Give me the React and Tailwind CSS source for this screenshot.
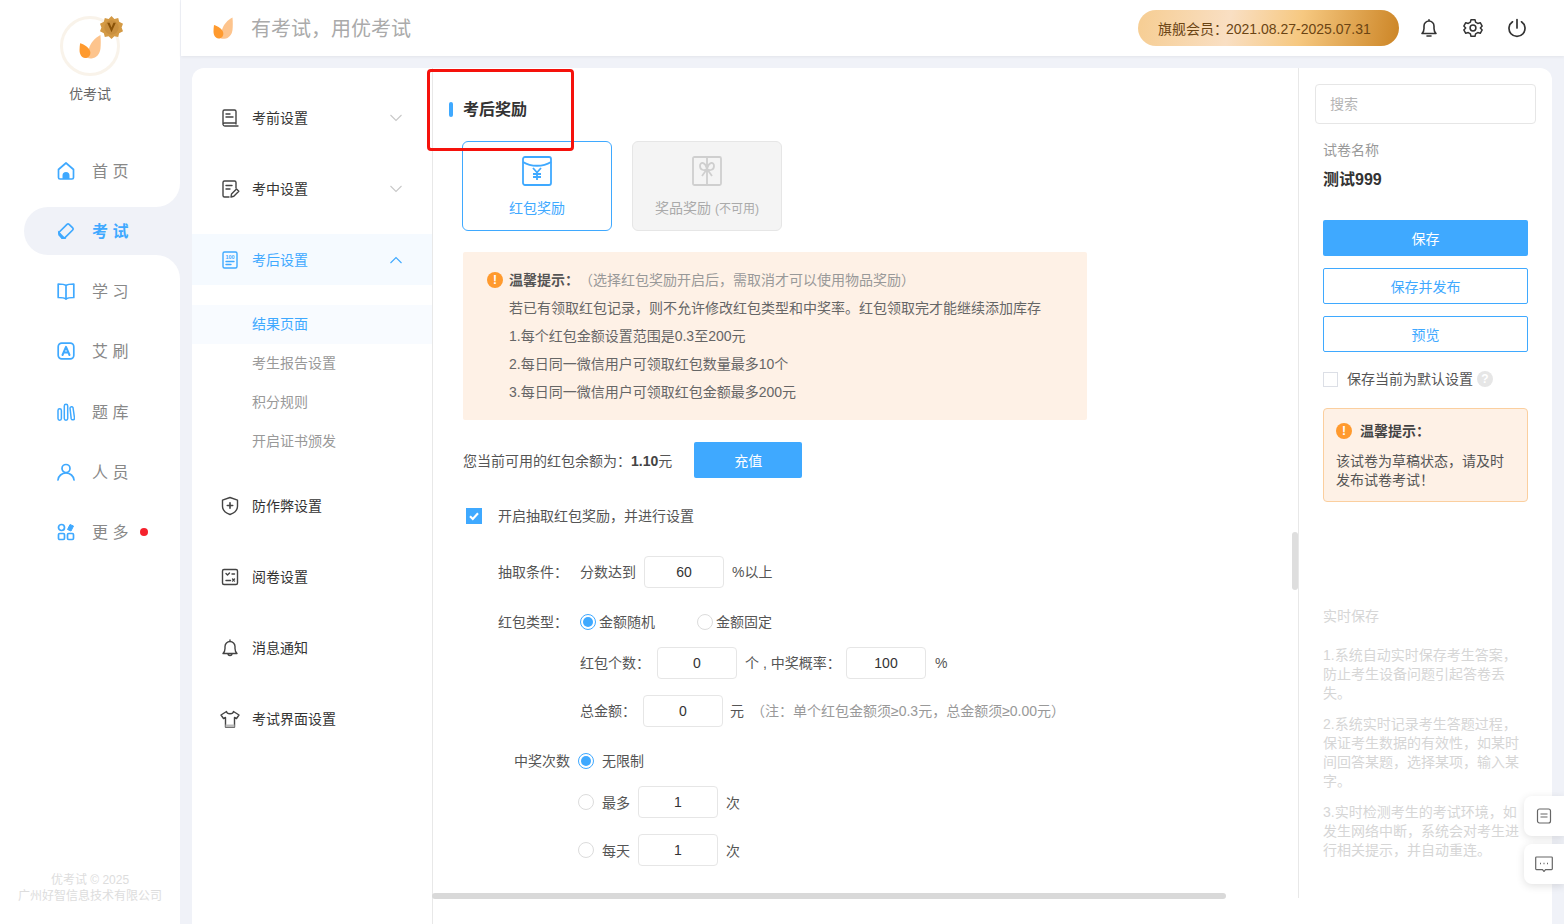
import React from 'react';

const Leaf = ({ className }) => (
  <svg className={className} viewBox="0 0 20 22" fill="none">
    <path d="M19.500 0.500C14.500 3 10.500 7.500 9 13L7 21c1.500.7 3 1 4.500.8 4.500-.5 7.300-3.800 8-8.800.4-3.500.4-8 0-12.500z" fill="#fdc48d" />
    <path d="M1 8c4 1.300 8.700 4 9.300 8 .4 3.300-2 5.800-4.800 5.500C2.300 21.200.500 18 .500 14.500c0-2.300.2-4.500.5-6.500z" fill="#ff9a2e" />
  </svg>
);

const Logo = () => (
  <div className="relative w-[60px] h-[60px] rounded-full border-[3px] border-[#f9f3ea] flex items-center justify-center">
    <Leaf className="w-[22px] h-[25px]" />
    <svg className="absolute -top-[3px] -right-[6px] w-[23px] h-[23px]" viewBox="0 0 24 24">
      <path d="M12 0l3 3 4-1 1 4 4 2-1.500 4L24 16l-4 2-1 4-4-1-3 3-3-3-4 1-1-4-4-2 1.500-4L0 8l4-2 1-4 4 1z" fill="#d49a45" />
      <circle cx="12" cy="12" r="7.500" fill="#c98f3e" />
      <path d="M7.500 7l4.500 10 4.500-10h-2.500L12 12 10 7z" fill="#8a5208" />
    </svg>
  </div>
);

const blue = '#3fa9ff';

const NavIcon = ({ type }) => {
  const p = { fill: 'none', stroke: blue, strokeWidth: 1.7, strokeLinejoin: 'round', strokeLinecap: 'round' };
  return (
    <svg className="w-[18px] h-[18px] shrink-0" viewBox="0 0 18 18">
      {type === 'home' && <><path {...p} d="M1.500 7.500L9 1l7.500 6.500v8a1.500 1.500 0 0 1-1.500 1.500H3a1.500 1.500 0 0 1-1.500-1.500z" /><path d="M5.500 17v-3.500a3.500 3.500 0 0 1 7 0V17z" fill={blue} /></>}
      {type === 'exam' && <><path {...p} d="M1.800 10.500L10 2.300a1.500 1.500 0 0 1 2.100 0l3.600 3.600a1.500 1.500 0 0 1 0 2.100L7.500 16.200H5z" /><path d="M1.800 10.500L7.500 16.200H5.200L2 13z" fill={blue} stroke={blue} strokeWidth="1.500" /></>}
      {type === 'learn' && <path {...p} d="M9 3.500C7.500 2.300 5 2 1.200 2v13.500c3.500 0 6.300.2 7.800 1.500 1.500-1.300 4.300-1.500 7.800-1.500V2C13 2 10.500 2.300 9 3.500zM9 3.500V17" />}
      {type === 'brush' && <><rect {...p} x="1.200" y="1.200" width="15.600" height="15.600" rx="3.500" /><path {...p} strokeWidth="2" d="M5.500 13L9 4.800 12.500 13M6.700 10.500h4.600" /></>}
      {type === 'bank' && <path {...p} strokeWidth="1.500" d="M1 7.500a1.700 1.700 0 0 1 3.400 0v8a1.700 1.700 0 0 1-3.400 0zM7.300 3a1.700 1.700 0 0 1 3.400 0v12.500a1.700 1.700 0 0 1-3.400 0zM13 5a1.600 1.600 0 0 1 3-.5l1.500 10.500a1.700 1.700 0 0 1-3.300.7z" />}
      {type === 'user' && <><circle {...p} cx="9" cy="5.500" r="4" /><path {...p} d="M1 17c.3-4 3.800-7 8-7s7.700 3 8 7" /></>}
      {type === 'more' && <><circle {...p} cx="4.500" cy="4.500" r="3" /><rect {...p} x="1.500" y="10.500" width="6" height="6" rx="1.200" /><rect {...p} x="10.500" y="10.500" width="6" height="6" rx="1.200" /><path d="M13 1.500l3.500 1.500-2.500 5-3.500-1.500z" fill={blue} stroke={blue} /></>}
    </svg>
  );
};

const SubIcon = ({ type, active }) => {
  const c = active ? blue : '#444';
  const p = { fill: 'none', stroke: c, strokeWidth: 1.400, strokeLinejoin: 'round', strokeLinecap: 'round' };
  return (
    <svg className="w-[20px] h-[20px] shrink-0" viewBox="0 0 20 20">
      {type === 'before' && <><path {...p} d="M3 16V3.500A1.500 1.500 0 0 1 4.500 2h10A1.500 1.500 0 0 1 16 3.500V16M3 16.500A1.800 1.800 0 0 0 4.800 18H18M3 16.500a1.500 1.500 0 0 1 1.500-1.500H16M6 6h4M6 9h7" /></>}
      {type === 'during' && <><path {...p} d="M16 9V3.500A1.500 1.500 0 0 0 14.500 2h-10A1.500 1.500 0 0 0 3 3.500v13A1.500 1.500 0 0 0 4.500 18H9M6 6.500h6M6 10h4" /><path {...p} d="M11 18l.5-3 5-5 2.300 2.300-5 5z" /></>}
      {type === 'after' && <><rect {...p} x="3" y="2" width="14" height="16" rx="1.500" /><text x="10" y="8.500" textAnchor="middle" fontSize="5.500" fontWeight="700" fill={c} fontFamily="Liberation Sans">100</text><path {...p} d="M6 11.500h8M6 14.500h5" /></>}
      {type === 'shield' && <><path {...p} d="M10 1.500l7.500 2.700v6c0 4-3.200 6.800-7.500 8.300-4.300-1.500-7.500-4.300-7.500-8.300v-6z" /><path {...p} strokeWidth="1.600" d="M10 6.800v5.400M7.300 9.500h5.400" /></>}
      {type === 'mark' && <><rect {...p} x="2.500" y="2.500" width="15" height="15" rx="1.500" /><path {...p} d="M6 6.500l1.500 1.500 2-2M12 7h2.500M6 13.500h4.500M12.500 12l2 2M14.500 12l-2 2" /></>}
      {type === 'bell' && <><path {...p} d="M3 15.500h14c-1.300-1.300-2-2.500-2-5V8.500a5 5 0 0 0-10 0v2c0 2.500-.7 3.700-2 5zM10 3.500V2M8 15.500a2 2 0 0 0 4 0" /></>}
      {type === 'shirt' && <><path {...p} d="M6.500 2.500L1 6l2.500 3.500 2-1V18h9V8.500l2 1L19 6l-5.500-3.500c-.4 3-6.600 3-7 0z" /><path d="M5.500 15.500h9V18h-9z" fill="#bbb" /></>}
    </svg>
  );
};

const Chevron = ({ up, active }) => (
  <svg className="w-[14px] h-[8px]" viewBox="0 0 14 8" fill="none" stroke={active ? blue : '#c8c8c8'} strokeWidth="1.100">
    <path d={up ? 'M1.500 7L7 1.500 12.500 7' : 'M1.500 1L7 6.500 12.500 1'} />
  </svg>
);

const Warn = () => (
  <span className="w-4 h-4 rounded-full bg-[#ff9a2e] text-white text-[12px] font-bold flex items-center justify-center shrink-0">!</span>
);

const NavItem = ({ icon, label, dot, active }) => (
  <div className={`h-[48px] flex items-center gap-[17px] ${active ? 'pl-[33px] text-[#3fa9ff] font-bold' : 'pl-[57px] text-[#888]'} text-[16px] leading-none`}>
    <NavIcon type={icon} />
    <span className="pt-[2px]">{label}</span>
    {dot && <span className="w-2 h-2 rounded-full bg-[#f5222d] -ml-[5px]" />}
  </div>
);

const SubRow = ({ icon, label, open, active, chevron }) => (
  <div className={`h-[51px] flex items-center pl-[28px] pr-[29px] text-[14px] ${active ? 'bg-[#f5faff] text-[#3fa9ff]' : 'text-[#333]'}`}>
    <SubIcon type={icon} active={active} />
    <span className="ml-[12px] flex-1 pt-[2px]">{label}</span>
    {chevron && <Chevron up={open} active={active} />}
  </div>
);

const SubItem = ({ label, active }) => (
  <div className={`h-[39px] flex items-center pl-[60px] text-[14px] ${active ? 'bg-[#f8fbff] text-[#3fa9ff]' : 'text-[#999]'}`}>{label}</div>
);

const Input = ({ value, w = 'w-[80px]' }) => (
  <div className={`${w} h-[32px] border border-[#e6e6e6] rounded-[4px] flex items-center justify-center text-[14px] text-[#333] shrink-0`}>{value}</div>
);

const Radio = ({ on }) => (
  on ? (
    <span className="w-4 h-4 rounded-full border border-[#3fa9ff] flex items-center justify-center shrink-0">
      <span className="w-[10px] h-[10px] rounded-full bg-[#3fa9ff]" />
    </span>
  ) : (
    <span className="w-4 h-4 rounded-full border border-[#dcdcdc] shrink-0" />
  )
);

export default function App() {
  return (
    <div className="w-[1564px] h-[924px] overflow-hidden flex bg-[#f0f2f8] font-['Liberation_Sans','Noto_Sans_CJK_SC',sans-serif] text-[14px] text-[#555] relative">
      {/* sidebar */}
      <aside className="w-[181px] shrink-0 flex flex-col pr-px">
        <div className="h-[207px] bg-white rounded-br-[24px] flex flex-col items-center">
          <div className="mt-[16px]"><Logo /></div>
          <div className="mt-[8px] h-[20px] leading-[20px] text-[#666]">优考试</div>
          <div className="mt-[43px] w-full"><NavItem icon="home" label="首 页" /></div>
        </div>
        <div className="h-[48px] bg-white pl-[24px]">
          <div className="h-full bg-[#f0f2f8] rounded-l-[24px]">
            <NavItem icon="exam" label="考 试" active />
          </div>
        </div>
        <div className="flex-1 bg-white rounded-tr-[24px] flex flex-col">
          <div className="pt-[12px] flex flex-col gap-[12.25px]">
            <NavItem icon="learn" label="学 习" />
            <NavItem icon="brush" label="艾 刷" />
            <NavItem icon="bank" label="题 库" />
            <NavItem icon="user" label="人 员" />
            <NavItem icon="more" label="更 多" dot />
          </div>
          <div className="mt-auto pb-[20px] text-center text-[12px] leading-[16px] text-[#ddd]">
            <div>优考试 © 2025</div>
            <div>广州好智信息技术有限公司</div>
          </div>
        </div>
      </aside>

      <div className="flex-1 flex flex-col min-w-0">
        {/* header */}
        <header className="h-[56px] bg-white shadow-[0_1px_3px_rgba(0,0,0,0.06)] flex items-center pl-[32px] pr-[37px] shrink-0">
          <Leaf className="w-[20px] h-[22px]" />
          <span className="ml-[18px] pt-[2px] text-[20px] text-[#aaa]">有考试，用优考试</span>
          <div className="ml-auto h-[36px] w-[261px] rounded-full bg-[linear-gradient(100deg,#f6cd92_0%,#f9dfc3_35%,#f6c880_62%,#cc8526_100%)] flex items-center pl-[20px] pt-[2px] text-[#6b4413] whitespace-nowrap">
            <span>旗舰会员：</span>
            <span className="-ml-[2px]">2021.08.27-2025.07.31</span>
          </div>
          <svg className="ml-[20px] w-[20px] h-[20px]" viewBox="0 0 20 20" fill="none" stroke="#333" strokeWidth="1.600" strokeLinejoin="round" strokeLinecap="round">
            <path d="M3 15.500h14c-1.300-1.300-2-2.500-2-5V8a5 5 0 0 0-10 0v2.500c0 2.500-.7 3.700-2 5zM10 3V1.800M8 18h4" />
          </svg>
          <svg className="ml-[24px] w-[20px] h-[20px]" viewBox="0 0 24 24" fill="none" stroke="#333" strokeWidth="1.800" strokeLinejoin="round">
            <path d="M9.600 2h4.800l.7 3 2.600 1.500 3-.9 2.300 4.100L20.800 12l2.200 2.300-2.300 4.100-3-.9-2.600 1.500-.7 3H9.600l-.7-3-2.600-1.500-3 .9L1 14.300 3.200 12 1 9.700l2.300-4.100 3 .9L8.900 5z" />
            <circle cx="12" cy="12" r="3.500" />
          </svg>
          <svg className="ml-[24px] w-[20px] h-[20px]" viewBox="0 0 20 20" fill="none" stroke="#333" strokeWidth="1.700" strokeLinecap="round">
            <path d="M10 1.500V10M5.500 3.800a8 8 0 1 0 9 0" />
          </svg>
        </header>

        {/* main card */}
        <main className="mt-[12px] ml-[11px] mr-[12px] flex-1 bg-white rounded-t-[12px] flex relative min-h-0">
          {/* sub nav */}
          <nav className="w-[241px] shrink-0 border-r border-[#e8e8e8] pt-[24px] flex flex-col">
            <SubRow icon="before" label="考前设置" chevron />
            <div className="mt-[20px]"><SubRow icon="during" label="考中设置" chevron /></div>
            <div className="mt-[20px]"><SubRow icon="after" label="考后设置" chevron open active /></div>
            <div className="mt-[20px]">
              <SubItem label="结果页面" active />
              <SubItem label="考生报告设置" />
              <SubItem label="积分规则" />
              <SubItem label="开启证书颁发" />
            </div>
            <div className="mt-[19px]"><SubRow icon="shield" label="防作弊设置" /></div>
            <div className="mt-[20px]"><SubRow icon="mark" label="阅卷设置" /></div>
            <div className="mt-[20px]"><SubRow icon="bell" label="消息通知" /></div>
            <div className="mt-[20px]"><SubRow icon="shirt" label="考试界面设置" /></div>
          </nav>

          {/* form */}
          <section className="w-[865px] shrink-0 pt-[30px] relative">
            <div className="h-[22px] pl-[16px] flex items-center">
              <span className="w-[4px] h-[15px] rounded-full bg-[#3fa9ff]" />
              <span className="ml-[10px] pt-[2px] text-[16px] font-bold text-[#333]">考后奖励</span>
            </div>
            <div className="pl-[30px]">
              <div className="mt-[21px] -ml-px flex gap-[20px]">
                <div className="w-[150px] h-[90px] rounded-[6px] border border-[#3fa9ff] flex flex-col items-center pt-[14px] text-[#3fa9ff]">
                  <svg className="w-[30px] h-[30px]" viewBox="0 0 30 30" fill="none" stroke={blue} strokeWidth="1.800">
                    <rect x="1" y="1" width="28" height="28" rx="2" />
                    <path d="M1 6c8 5 20 5 28 0" />
                    <path d="M11 12l4 4.500 4-4.500M15 16.500V24M11 18h8M11 21h8" />
                  </svg>
                  <span className="mt-[12px]">红包奖励</span>
                </div>
                <div className="w-[150px] h-[90px] rounded-[6px] border border-[#e6e6e6] bg-[#f4f4f4] flex flex-col items-center pt-[14px] text-[#aaa]">
                  <svg className="w-[30px] h-[30px]" viewBox="0 0 30 30" fill="none" stroke="#cfcfcf" strokeWidth="1.800">
                    <rect x="1" y="1" width="28" height="28" rx="1.500" />
                    <path d="M15 1v28M15 13c-3 2-7 1-7-3s5-5 7 3c2-8 7-7 7-3s-4 5-7 3zM15 13l-5 7M15 13l5 7" />
                  </svg>
                  <span className="mt-[12px]">奖品奖励 <span className="text-[12px]">(不可用)</span></span>
                </div>
              </div>

              <div className="mt-[21px] w-[624px] h-[168px] bg-[#fef1e6] rounded-[2px] py-[14px] pl-[24px] leading-[28px] text-[#666]">
                <div className="flex items-center">
                  <Warn />
                  <span className="ml-[6px] font-bold text-[#555]">温馨提示：</span>
                  <span className="text-[#999]">（选择红包奖励开启后，需取消才可以使用物品奖励）</span>
                </div>
                <div className="pl-[22px]">若已有领取红包记录，则不允许修改红包类型和中奖率。红包领取完才能继续添加库存</div>
                <div className="pl-[22px]">1.每个红包金额设置范围是0.3至200元</div>
                <div className="pl-[22px]">2.每日同一微信用户可领取红包数量最多10个</div>
                <div className="pl-[22px]">3.每日同一微信用户可领取红包金额最多200元</div>
              </div>

              <div className="mt-[22px] h-[36px] flex items-center">
                <span className="pt-[2px]">您当前可用的红包余额为：</span>
                <span className="pt-[2px] font-bold text-[#444]">1.10</span>
                <span className="pt-[2px]">元</span>
                <button className="ml-[22px] w-[108px] h-[36px] pt-[2px] bg-[#3fa9ff] text-white rounded-[2px]">充值</button>
              </div>

              <div className="mt-[28px] h-[20px] flex items-center pl-[3px]">
                <span className="w-4 h-4 bg-[#3fa9ff] flex items-center justify-center">
                  <svg className="w-3 h-3" viewBox="0 0 12 12" fill="none" stroke="#fff" strokeWidth="2.100"><path d="M2 6.200l2.800 2.800L10 3.200" /></svg>
                </span>
                <span className="ml-[16px]">开启抽取红包奖励，并进行设置</span>
              </div>

              <div className="mt-[30px] pl-[35px] flex items-center">
                <span className="w-[82px]">抽取条件：</span>
                <span>分数达到</span>
                <span className="ml-[8px]"><Input value="60" /></span>
                <span className="ml-[8px]">%以上</span>
              </div>

              <div className="mt-[24px] h-[20px] pl-[35px] flex items-center">
                <span className="w-[82px]">红包类型：</span>
                <Radio on />
                <span className="ml-[3px]">金额随机</span>
                <span className="ml-[42px] flex"><Radio /></span>
                <span className="ml-[3px]">金额固定</span>
              </div>

              <div className="mt-[15px] pl-[117px] flex items-center">
                <span className="w-[77px]">红包个数：</span>
                <Input value="0" />
                <span className="ml-[8px] w-[101px]">个 , 中奖概率：</span>
                <Input value="100" />
                <span className="ml-[9px]">%</span>
              </div>

              <div className="mt-[16px] pl-[117px] flex items-center">
                <span className="w-[63px]">总金额：</span>
                <Input value="0" />
                <span className="ml-[7px]">元</span>
                <span className="ml-[7px] text-[#999]">（注：单个红包金额须≥0.3元，总金额须≥0.00元）</span>
              </div>

              <div className="mt-[24px] h-[20px] pl-[51px] flex items-center">
                <span className="w-[64px]">中奖次数</span>
                <Radio on />
                <span className="ml-[8px]">无限制</span>
              </div>

              <div className="mt-[15px] pl-[115px] flex items-center">
                <Radio />
                <span className="ml-[8px] w-[36px] pt-[2px]">最多</span>
                <Input value="1" />
                <span className="ml-[8px] pt-[2px]">次</span>
              </div>

              <div className="mt-[16px] pl-[115px] flex items-center">
                <Radio />
                <span className="ml-[8px] w-[36px] pt-[2px]">每天</span>
                <Input value="1" />
                <span className="ml-[8px] pt-[2px]">次</span>
              </div>
            </div>

            <div className="absolute top-[464px] right-0 w-[6px] h-[58px] rounded-full bg-[#dedede]" />
            <div className="absolute top-[825px] -left-px w-[794px] h-[6px] rounded-full bg-[#d9d9d9]" />
          </section>

          {/* right panel */}
          <aside className="flex-1 h-[830px] border-l border-[#e8e8e8]">
            <div className="ml-[16px] mt-[16px] w-[221px] h-[40px] border border-[#e6e6e6] rounded-[4px] flex items-center pl-[14px] text-[#b5b5b5]">搜索</div>
            <div className="pl-[24px] w-[229px]">
              <div className="mt-[16px] h-[20px] leading-[20px] text-[#999]">试卷名称</div>
              <div className="mt-[8px] h-[24px] leading-[24px] text-[16px] font-bold text-[#333]">测试999</div>
              <button className="mt-[28px] block w-full h-[36px] pt-[2px] bg-[#3fa9ff] text-white rounded-[2px]">保存</button>
              <button className="mt-[12px] block w-full h-[36px] pt-[2px] border border-[#3fa9ff] text-[#3fa9ff] rounded-[2px]">保存并发布</button>
              <button className="mt-[12px] block w-full h-[36px] pt-[2px] border border-[#3fa9ff] text-[#3fa9ff] rounded-[2px]">预览</button>
              <div className="mt-[17px] h-[20px] flex items-center">
                <span className="w-[15px] h-[15px] border border-[#dcdfe6]" />
                <span className="ml-[9px]">保存当前为默认设置</span>
                <span className="ml-[4px] w-[16px] h-[16px] rounded-full bg-[#e6e6e6] text-white text-[12px] font-bold flex items-center justify-center">?</span>
              </div>
              <div className="mt-[19px] h-[94px] bg-[#fef1e6] border border-[#fbcf9f] rounded-[4px] pt-[12px] pl-[12px] pr-[16px]">
                <div className="flex items-center h-[20px]">
                  <Warn />
                  <span className="ml-[8px] font-bold text-[#444]">温馨提示：</span>
                </div>
                <div className="mt-[11px] leading-[19px]">该试卷为草稿状态，请及时发布试卷考试！</div>
              </div>
              <div className="mt-[104px] h-[20px] leading-[20px] text-[#d6d6d6]">实时保存</div>
              <div className="mt-[20px] leading-[19px] text-[#d6d6d6] flex flex-col gap-[12px]">
                <p>1.系统自动实时保存考生答案，防止考生设备问题引起答卷丢失。</p>
                <p>2.系统实时记录考生答题过程，保证考生数据的有效性，如某时间回答某题，选择某项，输入某字。</p>
                <p>3.实时检测考生的考试环境，如发生网络中断，系统会对考生进行相关提示，并自动重连。</p>
              </div>
            </div>
          </aside>
        </main>
      </div>

      {/* floating tools */}
      <div className="absolute left-[1524px] top-[796px] w-[40px] h-[40px] bg-white rounded-l-[8px] shadow-[0_2px_8px_rgba(0,0,0,0.12)] flex items-center justify-center">
        <svg className="w-[16px] h-[16px]" viewBox="0 0 16 16" fill="none" stroke="#666" strokeWidth="1.200">
          <rect x="1.500" y="1" width="13" height="14" rx="2" /><path d="M4.500 6h7M4.500 9h7" />
        </svg>
      </div>
      <div className="absolute left-[1524px] top-[844px] w-[40px] h-[40px] bg-white rounded-l-[8px] shadow-[0_2px_8px_rgba(0,0,0,0.12)] flex items-center justify-center">
        <svg className="w-[18px] h-[16px]" viewBox="0 0 18 16" fill="none" stroke="#666" strokeWidth="1.200">
          <path d="M1.500 1h15a.8.8 0 0 1 .8.8v11a.8.8 0 0 1-.8.8h-6L9 15.500l-1.500-1.900h-6a.8.8 0 0 1-.8-.8v-11a.8.8 0 0 1 .8-.8z" /><path strokeWidth="1.500" d="M5 7.500h1M8.500 7.500h1M12 7.500h1" />
        </svg>
      </div>

      {/* red annotation box */}
      <div className="absolute left-[427px] top-[69px] w-[147px] h-[82px] border-[3px] border-[#f5120c] rounded-[4px]" />
    </div>
  );
}
